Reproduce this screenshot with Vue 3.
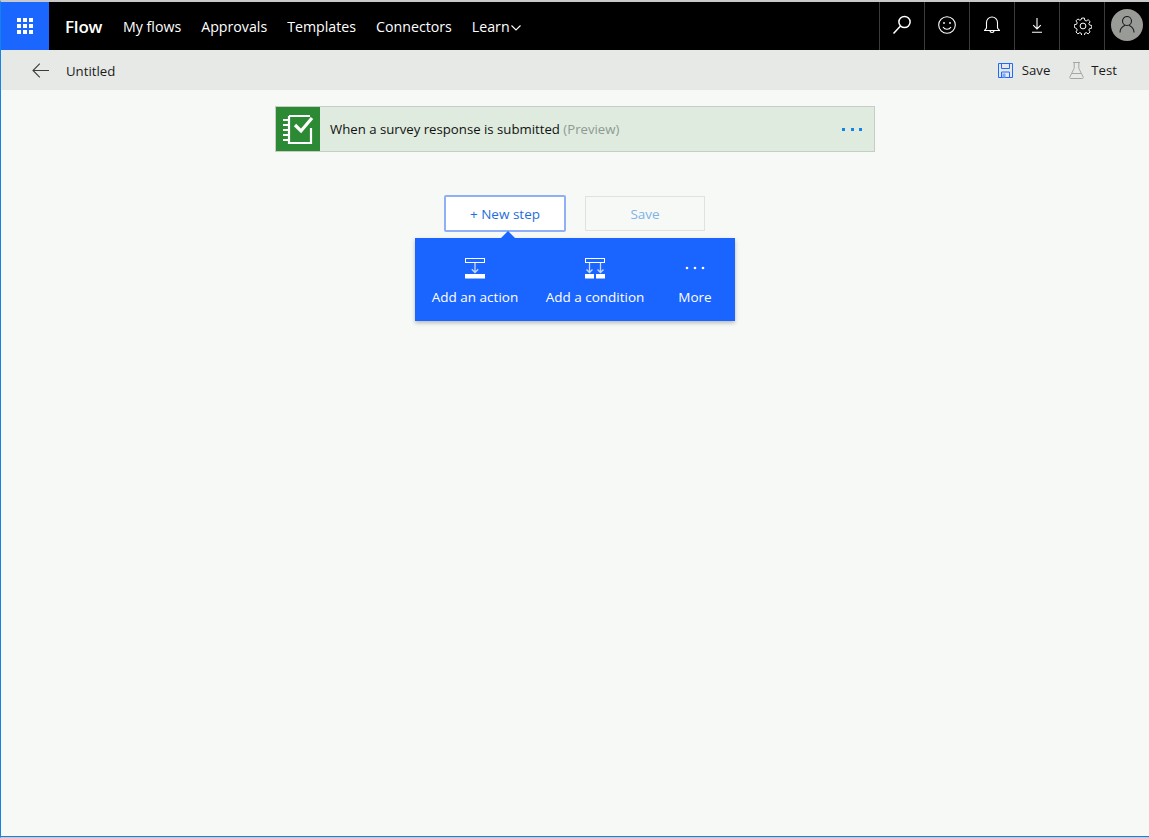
<script setup>
const navItems = ['My flows', 'Approvals', 'Templates', 'Connectors']
</script>

<template>
  <div class="window">
    <header class="topbar">
      <div class="waffle">
        <svg width="16" height="16" viewBox="0 0 16 16" fill="#fff">
          <rect x="0" y="0" width="4" height="4" /><rect x="6" y="0" width="4" height="4" /><rect x="12" y="0" width="4" height="4" />
          <rect x="0" y="6" width="4" height="4" /><rect x="6" y="6" width="4" height="4" /><rect x="12" y="6" width="4" height="4" />
          <rect x="0" y="12" width="4" height="4" /><rect x="6" y="12" width="4" height="4" /><rect x="12" y="12" width="4" height="4" />
        </svg>
      </div>
      <span class="brand">Flow</span>
      <nav class="nav">
        <span v-for="item in navItems" :key="item">{{ item }}</span>
        <span class="learn">Learn<svg class="chev" width="10" height="6" viewBox="0 0 10 6" fill="none" stroke="#fff" stroke-width="1.1"><path d="M.5.5 5 5 9.5.5" /></svg></span>
      </nav>
      <div class="tools">
        <div class="tool">
          <svg class="raise" width="20" height="20" viewBox="0 0 20 20" fill="none" stroke="#fff" stroke-width="1.5"><circle cx="12.5" cy="7" r="5.6" /><path d="M8.500 11 1.500 18.500" /></svg>
        </div>
        <div class="tool">
          <svg class="raise-sm" width="18" height="18" viewBox="0 0 18 18" fill="none" stroke="#fff" stroke-width="1.1"><circle cx="9" cy="9" r="8.3" /><circle cx="6" cy="7" r=".9" fill="#fff" stroke="none" /><circle cx="12" cy="7" r=".9" fill="#fff" stroke="none" /><path d="M5 11c1 1.600 2.400 2.300 4 2.300s3-.7 4-2.300" /></svg>
        </div>
        <div class="tool">
          <svg class="raise-sm" width="16" height="18" viewBox="0 0 16 18" fill="none" stroke="#fff" stroke-width="1.1"><path d="M2.500 12V6.500a5.500 5.500 0 0 1 11 0V12l2 2.500H.5L2.500 12Z" /><path d="M6 14.500c0 2.600 4 2.600 4 0" /></svg>
        </div>
        <div class="tool">
          <svg class="raise-xs" width="10" height="15" viewBox="0 0 10 15" fill="none" stroke="#fff" stroke-width="1.1"><path d="M5 0v11M1.200 7.200 5 11l3.800-3.800M0 14.300h10" /></svg>
        </div>
        <div class="tool">
          <svg class="gear" width="18" height="18" viewBox="0 0 18 18" fill="none" stroke="#fff" stroke-width="1"><path d="M7.600.8h2.800l.4 2.300 1.500.7 2-1.300 2 2-1.300 2 .7 1.500 2.300.4v2.800l-2.300.4-.7 1.500 1.300 2-2 2-2-1.300-1.500.7-.4 2.300H7.600l-.4-2.300-1.500-.7-2 1.300-2-2 1.300-2-.7-1.500L0 10.400V7.600l2.300-.4.7-1.500-1.300-2 2-2 2 1.300 1.500-.7Z" transform="translate(.3 .3) scale(.97)" /><circle cx="9" cy="9" r="2.900" /></svg>
        </div>
        <div class="tool avatar-cell">
          <div class="avatar">
            <svg width="16" height="17" viewBox="0 0 16 17" fill="none" stroke="#1c1c1c" stroke-width="1.100"><circle cx="8" cy="5" r="4.500" /><path d="M1 16.500c0-3.500 2.500-6 5-7.200M15 16.500c0-3.500-2.500-6-5-7.200" /></svg>
          </div>
        </div>
      </div>
    </header>

    <div class="subbar">
      <div class="sub-left">
        <svg class="back" width="17" height="15" viewBox="0 0 17 15" fill="none" stroke="#3c3c41" stroke-width="1.100"><path d="M17 7.500H1M7.800.7 1 7.500l6.800 6.800" /></svg>
        <span class="doc-title">Untitled</span>
      </div>
      <div class="sub-right">
        <span class="action">
          <svg width="15" height="15" viewBox="0 0 15 15" fill="none" stroke="#1f6bff" stroke-width="1"><path d="M.5.500h14v14H.5z" /><path d="M3.500.5v5h8v-5M3.500 14.500V9h8v5.500" /><rect x="4.500" y="10.500" width="3" height="4" fill="#7da6ff" stroke="none" /></svg>
          Save
        </span>
        <span class="action test">
          <svg width="15" height="17" viewBox="0 0 15 17" fill="none" stroke="#a6a6a6" stroke-width="1"><path d="M4 .5h7M5.200.5v5.800L.8 15a1 1 0 0 0 .9 1.500h11.600a1 1 0 0 0 .9-1.500L9.800 6.300V.5M3 11.500h9" /></svg>
          Test
        </span>
      </div>
    </div>

    <main class="canvas">
      <div class="trigger">
        <div class="trigger-icon">
          <svg width="32" height="32" viewBox="0 0 32 32" fill="none" stroke="#fff" stroke-width="2.200"><path d="M7 3h21M7 3v27h22V15" /><path d="M1 7h5M1 12h5M1 17h5M1 22h5M1 27h5" stroke-width="1.800" /><path d="m13 12 6 6L30 5" stroke-width="3.200" /></svg>
        </div>
        <div class="trigger-title">When a survey response is submitted <span class="preview">(Preview)</span></div>
        <div class="dots"><i></i><i></i><i></i></div>
      </div>

      <div class="buttons">
        <button class="new-step">+ New step</button>
        <button class="save-flow">Save</button>
      </div>

      <div class="popup">
        <div class="pop-item action-item">
          <svg width="20" height="21" viewBox="0 0 20 21" fill="none" stroke="#fff" stroke-width="1"><rect x=".5" y=".5" width="19" height="4" /><path d="M10 5v9.500M6.800 11.300 10 14.500l3.200-3.200" stroke="#c4d8ff" stroke-width="1.300" /><rect y="16" width="20" height="4.500" fill="#fff" stroke="none" /></svg>
          <span>Add an action</span>
        </div>
        <div class="pop-item condition-item">
          <svg width="20" height="21" viewBox="0 0 20 21" fill="none" stroke="#fff" stroke-width="1"><rect x=".5" y=".5" width="19" height="4" /><path d="M4.500 5v9.500M1.500 11.500l3 3 3-3M15.500 5v9.500M12.500 11.500l3 3 3-3" stroke="#c4d8ff" stroke-width="1.300" /><rect y="16" width="9" height="4.500" fill="#fff" stroke="none" /><rect x="11" y="16" width="9" height="4.500" fill="#fff" stroke="none" /></svg>
          <span>Add a condition</span>
        </div>
        <div class="pop-item more-item">
          <svg width="20" height="21" viewBox="0 0 20 21" fill="#fff"><circle cx="2" cy="10" r="1.300" /><circle cx="10" cy="10" r="1.300" /><circle cx="18" cy="10" r="1.300" /></svg>
          <span>More</span>
        </div>
      </div>
    </main>
  </div>
</template>

<style>
html, body { margin: 0; padding: 0; }
</style>

<style scoped>
.window {
  width: 1149px;
  height: 838px;
  box-sizing: border-box;
  display: flex;
  flex-direction: column;
  overflow: hidden;
  background: #f7f9f6;
  border-top: 2px solid #c9c9c9;
  border-bottom: 1px solid #c9c9c9;
  border-left: 1px solid #1283e8;
  font-family: "Open Sans", "Noto Sans", sans-serif;
  font-size: 13.2px;
  color: #1a1a1a;
}
.topbar {
  height: 48px;
  flex: none;
  background: #000;
  color: #fff;
  display: flex;
  align-items: center;
}
.waffle {
  width: 48px;
  height: 48px;
  background: #1a66ff;
  display: flex;
  align-items: center;
  justify-content: center;
}
.brand {
  margin-left: 16px;
  font-size: 17px;
  font-weight: 600;
  letter-spacing: -0.2px;
  width: 58px;
}
.nav {
  display: flex;
  gap: 20px;
  font-size: 14.2px;
}
.learn { display: inline-flex; align-items: center; gap: 1px; }
.chev { margin-top: 3px; }
.tools { margin-left: auto; display: flex; height: 48px; }
.tool {
  width: 45px;
  box-sizing: border-box;
  border-left: 1px solid #3b3b3b;
  display: flex;
  align-items: center;
  justify-content: center;
}
.raise { margin-bottom: 2px; }
.raise-sm { margin-bottom: 2px; }
.raise-xs { margin-bottom: 1px; }
.gear { margin: 0 0 1px 2px; }
.avatar-cell { padding-bottom: 3px; }
.avatar {
  width: 32px;
  height: 32px;
  border-radius: 50%;
  background: #999b97;
  display: flex;
  align-items: center;
  justify-content: center;
}
.subbar {
  height: 40px;
  flex: none;
  background: #e7e9e6;
  display: flex;
  align-items: center;
  justify-content: space-between;
  padding: 0 32px 0 31px;
}
.sub-left { display: flex; align-items: center; gap: 17px; }
.doc-title { padding-top: 1px; }
.sub-right { display: flex; align-items: center; gap: 19px; }
.action { display: inline-flex; align-items: center; gap: 9px; }
.test { gap: 7px; }
.canvas {
  flex: 1;
  display: flex;
  flex-direction: column;
  align-items: center;
  border-bottom: 1px solid #1283e8;
  padding-top: 16px;
}
.trigger {
  width: 600px;
  height: 46px;
  box-sizing: border-box;
  border: 1px solid #c8ccc6;
  background: #dfebdf;
  display: flex;
  align-items: center;
}
.trigger-icon {
  width: 44px;
  height: 44px;
  background: #2d8a34;
  display: flex;
  align-items: center;
  justify-content: center;
}
.trigger-title { margin-left: 10px; flex: 1; color: #111; }
.preview { color: #8d9a92; }
.dots { display: flex; gap: 5.5px; margin-right: 12px; }
.dots i { width: 3px; height: 3px; background: #1283e8; display: block; }
.buttons { display: flex; align-items: center; gap: 19px; margin: 43px 1px 0 0; }
button {
  font-family: inherit;
  font-size: 13.5px;
  box-sizing: border-box;
  padding: 0;
}
.new-step {
  width: 122px;
  height: 37px;
  background: #fff;
  border: 2px solid #8fb0f5;
  border-radius: 2px;
  color: #1f6fd8;
}
.save-flow {
  width: 120px;
  height: 35px;
  background: #f7f9f6;
  border: 1px solid #dfe2df;
  color: #7db3e8;
}
.popup {
  position: relative;
  width: 320px;
  height: 83px;
  margin-top: 6px;
  background: #1a64ff;
  box-shadow: 0 2px 4px rgba(0, 0, 0, 0.25);
  color: #fff;
  display: flex;
  font-size: 13.5px;
}
.popup::before {
  content: "";
  position: absolute;
  left: 86px;
  top: -7px;
  border-left: 7px solid transparent;
  border-right: 7px solid transparent;
  border-bottom: 7px solid #1a64ff;
}
.pop-item {
  display: flex;
  flex-direction: column;
  align-items: center;
  gap: 9px;
  padding-top: 20px;
  white-space: nowrap;
}
.action-item { width: 120px; }
.condition-item { width: 120px; }
.more-item { width: 80px; }
</style>
